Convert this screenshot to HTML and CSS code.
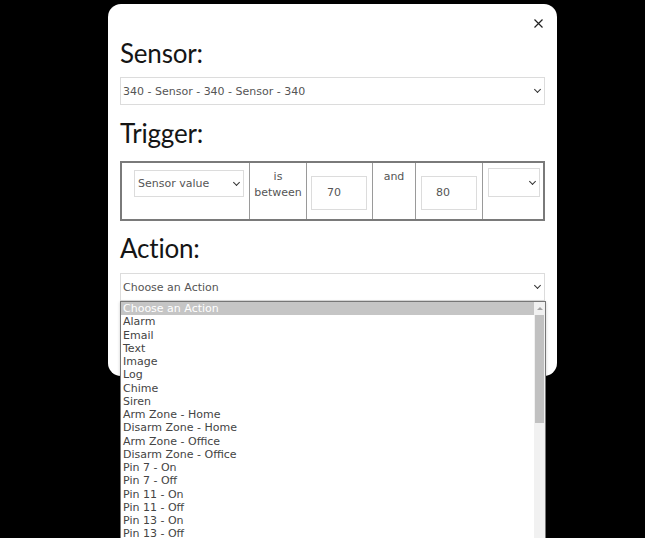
FILE: index.html
```html
<!DOCTYPE html>
<html>
<head>
<meta charset="utf-8">
<link rel="stylesheet" href="styles.css">
</head>
<body>
<div class="modal">
  <div class="close-row">
    <svg class="close" width="9" height="9" viewBox="0 0 9 9"><path d="M0.5 0.5 L8.5 8.5 M8.5 0.5 L0.5 8.5" stroke="#222" stroke-width="1.2" fill="none"/></svg>
  </div>
  <h2 class="heading h-sensor">Sensor:</h2>
  <div class="select wide sensor"><span>340 - Sensor - 340 - Sensor - 340</span><span class="chev"></span></div>
  <h2 class="heading h-trigger">Trigger:</h2>
  <table class="trigger">
    <tr>
      <td class="c1"><div class="select small"><span>Sensor value</span><span class="chev"></span></div></td>
      <td class="c2">is<br>between</td>
      <td class="c3"><div class="input">70</div></td>
      <td class="c4">and</td>
      <td class="c5"><div class="input">80</div></td>
      <td class="c6"><div class="select tiny"><span></span><span class="chev"></span></div></td>
    </tr>
  </table>
  <h2 class="heading h-action">Action:</h2>
  <div class="select wide action"><span>Choose an Action</span><span class="chev"></span>
    <div class="list">
      <ul class="options">
        <li class="sel">Choose an Action</li>
        <li>Alarm</li>
        <li>Email</li>
        <li>Text</li>
        <li>Image</li>
        <li>Log</li>
        <li>Chime</li>
        <li>Siren</li>
        <li>Arm Zone - Home</li>
        <li>Disarm Zone - Home</li>
        <li>Arm Zone - Office</li>
        <li>Disarm Zone - Office</li>
        <li>Pin 7 - On</li>
        <li>Pin 7 - Off</li>
        <li>Pin 11 - On</li>
        <li>Pin 11 - Off</li>
        <li>Pin 13 - On</li>
        <li>Pin 13 - Off</li>
      </ul>
      <div class="scrollbar"><div class="arrow"></div><div class="thumb"></div></div>
    </div>
  </div>
</div>
</body>
</html>
```
FILE: styles.css
```css
html, body {
  margin: 0;
  padding: 0;
  background: #000;
  height: 100%;
  overflow: hidden;
}
.modal {
  margin: 4px 0 0 108px;
  width: 449px;
  height: 372px;
  box-sizing: border-box;
  background: #fff;
  border-radius: 13px;
  padding: 0 12px;
  font-family: "DejaVu Sans", Verdana, sans-serif;
}
.close-row {
  display: flex;
  justify-content: flex-end;
  align-items: flex-start;
  height: 28px;
  box-sizing: border-box;
  padding-top: 15px;
}
.close {
  display: block;
  margin-right: 2px;
}
.heading {
  font-family: "Lato", "Noto Sans", sans-serif;
  font-weight: 400;
  font-size: 26px;
  letter-spacing: -0.2px;
  color: #151515;
  margin: 0;
  line-height: 42px;
  height: 41px;
}
.h-sensor { margin-bottom: 4px; }
.h-trigger { margin-bottom: 8px; }
.h-action { margin-bottom: 5px; }
.select {
  box-sizing: border-box;
  border: 1px solid #dcdcdc;
  display: flex;
  align-items: center;
  justify-content: space-between;
  font-size: 11px;
  color: #555;
  background: #fff;
  position: relative;
}
.select span:first-child {
  padding-left: 2px;
}
.chev {
  width: 4px;
  height: 4px;
  border-right: 1.5px solid #333;
  border-bottom: 1.5px solid #333;
  transform: rotate(45deg);
  margin-right: 4px;
  margin-top: -3px;
}
.wide {
  width: 425px;
  height: 28px;
}
.sensor { margin-bottom: 7px; }
.trigger {
  width: 425px;
  height: 60px;
  border-collapse: collapse;
  border: 2px solid #7a7a7a;
  margin-bottom: 6px;
  font-size: 11px;
  color: #555;
}
.trigger td {
  border: 1px solid #9a9a9a;
  vertical-align: top;
  padding: 0;
  text-align: center;
  line-height: 16px;
}
.c1 { width: 127px; }
.c2 { width: 56px; padding-top: 6px !important; }
.c3 { width: 65px; }
.c4 { width: 42px; padding-top: 6px !important; }
.c5 { width: 66px; }
.c1 .select { width: 110px; height: 27px; margin: 7px 0 0 12px; }
.select.small span:first-child { padding-left: 3px; }
.c6 .select { width: 52px; height: 29px; margin: 5px 0 0 5px; }
.input {
  box-sizing: border-box;
  border: 1px solid #dcdcdc;
  height: 34px;
  width: 56px;
  margin: 13px 0 0 4px;
  text-align: left;
  padding-left: 15px;
  line-height: 32px;
}
.c5 .input { width: 56px; margin-left: 5px; padding-left: 14px; }
.list {
  position: absolute;
  left: -1px;
  top: 27px;
  width: 426px;
  height: 260px;
  box-sizing: border-box;
  border: 1px solid #767676;
  border-bottom: none;
  background: #fff;
  display: flex;
  box-shadow: 0 1px 3px rgba(0,0,0,0.2);
}
.options {
  list-style: none;
  margin: 0;
  padding: 0;
  flex: 1;
  font-size: 11px;
  color: #444;
}
.options li {
  height: 13.25px;
  line-height: 13.25px;
  padding-left: 2px;
  white-space: nowrap;
}
.options li.sel {
  background: #c5c5c5;
  color: #fff;
}
.scrollbar {
  width: 11px;
  background: #f1f1f1;
  display: flex;
  flex-direction: column;
  align-items: center;
}
.arrow {
  width: 0;
  height: 0;
  border-left: 3px solid transparent;
  border-right: 3px solid transparent;
  border-bottom: 3px solid #a3a3a3;
  margin: 5px 0 5px;
}
.thumb {
  width: 9px;
  height: 108px;
  background: #c1c1c1;
}
```
